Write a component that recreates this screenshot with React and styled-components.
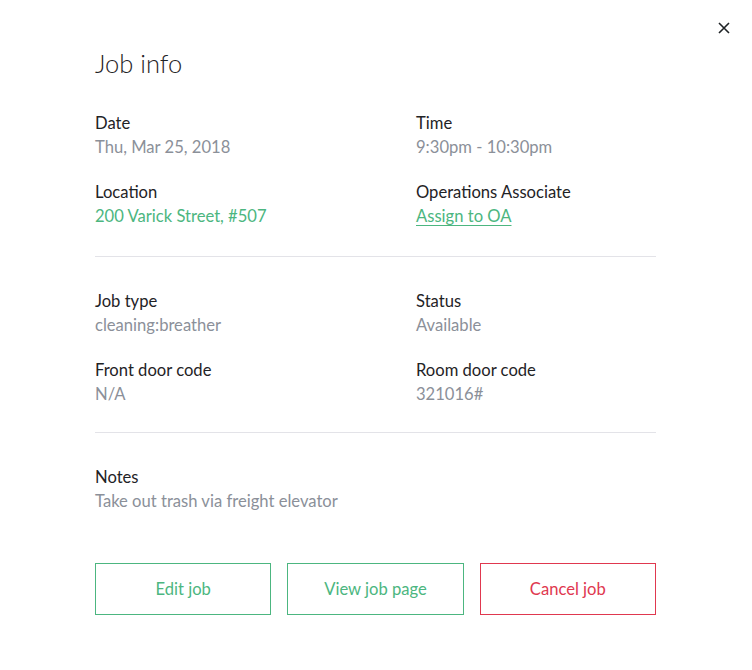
import React from 'react';
import styled, { createGlobalStyle } from 'styled-components';

const color = {
  text: '#1f2326',
  muted: '#8b9099',
  green: '#4cb680',
  red: '#e0384f',
  rule: '#e3e3e8',
};

const GlobalStyle = createGlobalStyle`
  body {
    margin: 0;
    background: #fff;
    font-family: Lato, "Noto Sans", sans-serif;
    -webkit-font-smoothing: antialiased;
  }
`;

const rows = [
  [
    [
      { label: 'Date', value: 'Thu, Mar 25, 2018' },
      { label: 'Time', value: '9:30pm - 10:30pm' },
    ],
    [
      { label: 'Location', value: '200 Varick Street, #507', kind: 'green' },
      { label: 'Operations Associate', value: 'Assign to OA', kind: 'link' },
    ],
  ],
  [
    [
      { label: 'Job type', value: 'cleaning:breather' },
      { label: 'Status', value: 'Available' },
    ],
    [
      { label: 'Front door code', value: 'N/A' },
      { label: 'Room door code', value: '321016#' },
    ],
  ],
];

class App extends React.Component {
  render() {
    return (
      <Modal>
        <GlobalStyle />
        <Close aria-label="Close">
          <svg width="12" height="12" viewBox="0 0 12 12">
            <path d="M1 1L11 11M11 1L1 11" stroke="#1f2326" strokeWidth="1.6" />
          </svg>
        </Close>
        <Title>Job info</Title>
        {rows.map((section, i) => (
          <Section key={i} top={i === 0 ? 0 : 32} bottom={i === 0 ? 28 : 26} ruled>
            {section.map((pair, j) => (
              <Grid key={j}>
                {pair.map(f => (
                  <Field key={f.label}>
                    <Label>{f.label}</Label>
                    <Value kind={f.kind}>{f.value}</Value>
                  </Field>
                ))}
              </Grid>
            ))}
          </Section>
        ))}
        <Section top={32} bottom={0}>
          <Field>
            <Label>Notes</Label>
            <Value>Take out trash via freight elevator</Value>
          </Field>
        </Section>
        <Buttons>
          <Button>Edit job</Button>
          <Button>View job page</Button>
          <Button danger>Cancel job</Button>
        </Buttons>
      </Modal>
    );
  }
}

const Modal = styled.div`
  position: relative;
  width: 752px;
  height: 670px;
  box-sizing: border-box;
  padding: 47px 96px 0 95px;
  background: #fff;
`;

const Close = styled.button`
  position: absolute;
  top: 22px;
  right: 22px;
  width: 12px;
  height: 12px;
  padding: 0;
  border: 0;
  background: none;
  display: flex;
  cursor: pointer;
`;

const Title = styled.h1`
  margin: 0 0 32px;
  font-size: 25.5px;
  line-height: 32px;
  font-weight: 300;
  color: ${color.text};
`;

const Section = styled.div`
  display: flex;
  flex-direction: column;
  gap: 21px;
  padding: ${p => p.top}px 0 ${p => p.bottom}px;
  border-bottom: ${p => (p.ruled ? `1px solid ${color.rule}` : '0')};
`;

const Grid = styled.div`
  display: grid;
  grid-template-columns: 321px 1fr;
`;

const Field = styled.div`
  display: flex;
  flex-direction: column;
`;

const Label = styled.div`
  font-size: 16.6px;
  line-height: 24px;
  color: ${color.text};
`;

const Value = styled.div`
  font-size: 16.6px;
  line-height: 24px;
  color: ${p => (p.kind ? color.green : color.muted)};
  text-decoration: ${p => (p.kind === 'link' ? 'underline' : 'none')};
  text-underline-offset: 3px;
`;

const Buttons = styled.div`
  display: grid;
  grid-template-columns: repeat(3, 1fr);
  gap: 16px;
  margin-top: 50px;
`;

const Button = styled.button`
  height: 52px;
  background: #fff;
  border: 1px solid ${p => (p.danger ? color.red : color.green)};
  color: ${p => (p.danger ? color.red : color.green)};
  font-family: Lato, "Noto Sans", sans-serif;
  font-size: 16.6px;
  cursor: pointer;
`;

export default App;
